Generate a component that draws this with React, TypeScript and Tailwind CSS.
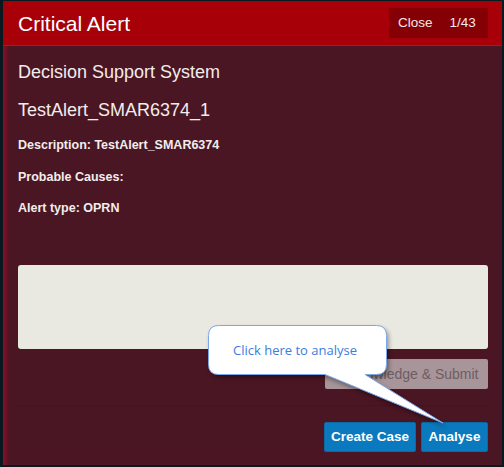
import React from "react";

const font = { fontFamily: '"Liberation Sans", Arial, sans-serif' };

const Callout = () => (
  <div className="absolute left-0 top-0 w-[504px] h-[467px] pointer-events-none">
    <svg
      width="504"
      height="467"
      className="absolute left-0 top-0 drop-shadow-[2px_3px_2px_rgba(0,0,0,0.35)]"
    >
      <path
        d="M218.5 325.5 H376.5 Q386.5 325.5 386.5 335.5 V364.5 Q386.5 374.5 376.5 374.5 H365 L443 423 L325 374.5 H218.5 Q208.5 374.5 208.5 364.5 V335.5 Q208.5 325.5 218.5 325.5 Z"
        fill="#ffffff"
        stroke="#7ba6ea"
        strokeWidth="1"
      />
    </svg>
    <div className="absolute left-[206px] top-[325px] w-[178px] h-[50px] flex items-center justify-center pt-[2px]">
      <span className="text-[13px] text-[#3a7ce2]" style={{ fontFamily: '"Open Sans", sans-serif' }}>
        Click here to analyse
      </span>
    </div>
  </div>
);

export default function App() {
  return (
    <div className="relative w-[504px] h-[467px] bg-[#0a1820] pt-[1px] pl-[3px] pr-[2px] pb-[2px]" style={font}>
      <div className="flex flex-col h-full bg-[#4b1623] shadow-[inset_6px_0_5px_-3px_#8e1126]">
        {/* header */}
        <div className="flex items-center justify-between h-[45px] bg-[#a70008] border-b border-[#cc0a12] pl-[15px] pr-[14px]">
          <h1 className="text-[21px] text-white leading-none">Critical Alert</h1>
          <div className="flex items-center h-[30px] w-[99px] bg-[#840005] rounded-[2px] text-[13.5px] text-[#f2e8e8] pl-[9px] gap-[17px]">
            <span>Close</span>
            <span>1/43</span>
          </div>
        </div>

        {/* body */}
        <div className="flex flex-col flex-1 pl-[15px] pr-[14px] pt-[14px] pb-[12px] text-[#f1eded]">
          <div className="text-[18px] leading-[24px]">Decision Support System</div>
          <div className="text-[18px] leading-[24px] mt-[14px]">TestAlert_SMAR6374_1</div>
          <div className="text-[12.5px] font-bold leading-[18px] mt-[14px]">Description: TestAlert_SMAR6374</div>
          <div className="text-[12.5px] font-bold leading-[18px] mt-[14px]">Probable Causes:</div>
          <div className="text-[12.5px] font-bold leading-[18px] mt-[13px]">Alert type: OPRN</div>

          <div className="h-[84px] mt-[48px] bg-[#eae9e1] rounded-[3px]" />

          <div className="flex justify-end mt-[10px]">
            <button className="h-[30px] w-[163px] bg-[#a8959a] rounded-[2px] text-[14px] text-[#6d5d62] flex items-center justify-center">
              Acknowledge &amp; Submit
            </button>
          </div>

          <div className="h-px bg-[#43131e] mt-[16px]" />

          <div className="flex justify-end gap-[5px] mt-[16px]">
            <button className="h-[30px] w-[92px] bg-[#0b79bd] border border-[#0a6aa6] rounded-[2px] text-[13.5px] font-bold text-white">
              Create Case
            </button>
            <button className="h-[30px] w-[67px] bg-[#0b79bd] border border-[#0a6aa6] rounded-[2px] text-[13.5px] font-bold text-white">
              Analyse
            </button>
          </div>
        </div>
      </div>
      <Callout />
    </div>
  );
}
